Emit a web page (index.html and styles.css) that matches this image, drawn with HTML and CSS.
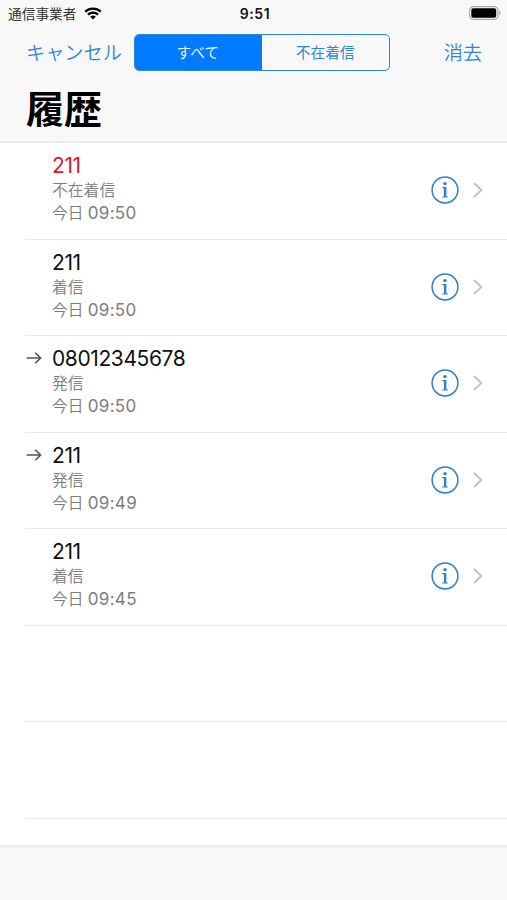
FILE: index.html
```html
<!DOCTYPE html>
<html lang="ja">
<head>
<meta charset="utf-8">
<title>履歴</title>
<link rel="stylesheet" href="styles.css">
</head>
<body>
<svg class="defs" aria-hidden="true">
  <symbol id="info" viewBox="0 0 28 28">
    <circle cx="14" cy="14" r="12.9" fill="none" stroke="currentColor" stroke-width="1.5"/>
    <circle cx="14" cy="7.6" r="1.7" fill="currentColor"/>
    <path d="M11.3 11h4.1v9.4h1.5v1.2h-5.6v-1.2h1.6v-8.2h-1.6z" fill="currentColor"/>
  </symbol>
  <symbol id="chevron" viewBox="0 0 10 16">
    <path d="M1 1l7.4 7L1 15" fill="none" stroke="currentColor" stroke-width="1.9"/>
  </symbol>
  <symbol id="arrow" viewBox="0 0 16 12">
    <path d="M.6 6h14M9.2 .7l5.4 5.3-5.4 5.3" fill="none" stroke="currentColor" stroke-width="1.6"/>
  </symbol>
</svg>
<div class="screen">
  <header class="header">
    <div class="status">
      <div class="carrier">
        <span>通信事業者</span>
        <svg class="wifi" viewBox="0 0 18 13">
          <path d="M1.2 4.7a11.2 11.2 0 0 1 15.6 0M4 7.7a7.2 7.2 0 0 1 10 0" fill="none" stroke="currentColor" stroke-width="2.3"/>
          <path d="M9 12.6L6.2 9.8a4 4 0 0 1 5.6 0z" fill="currentColor"/>
        </svg>
      </div>
      <div class="clock">9:51</div>
      <svg class="battery" viewBox="0 0 32 14">
        <rect x=".6" y=".6" width="28.3" height="12.8" rx="3.6" fill="none" stroke="#aaa" stroke-width="1.2"/>
        <rect x="2.3" y="2.3" width="24.9" height="9.4" rx="1.8" fill="#000"/>
        <path d="M30.2 4.8c1.8.6 1.8 3.8 0 4.4z" fill="#999"/>
      </svg>
    </div>
    <nav class="nav">
      <span class="action">キャンセル</span>
      <div class="segments">
        <span class="segment selected">すべて</span>
        <span class="segment">不在着信</span>
      </div>
      <span class="action clear">消去</span>
    </nav>
    <h1>履歴</h1>
  </header>
  <main class="list">
    <div class="row missed">
      <div class="direction"></div>
      <div class="call"><div class="number">211</div><div class="kind">不在着信</div><div class="time">今日 <span>09:50</span></div></div>
      <svg class="info"><use href="#info"/></svg><svg class="chevron"><use href="#chevron"/></svg>
    </div>
    <div class="row">
      <div class="direction"></div>
      <div class="call"><div class="number">211</div><div class="kind">着信</div><div class="time">今日 <span>09:50</span></div></div>
      <svg class="info"><use href="#info"/></svg><svg class="chevron"><use href="#chevron"/></svg>
    </div>
    <div class="row">
      <div class="direction"><svg class="arrow"><use href="#arrow"/></svg></div>
      <div class="call"><div class="number">08012345678</div><div class="kind">発信</div><div class="time">今日 <span>09:50</span></div></div>
      <svg class="info"><use href="#info"/></svg><svg class="chevron"><use href="#chevron"/></svg>
    </div>
    <div class="row">
      <div class="direction"><svg class="arrow"><use href="#arrow"/></svg></div>
      <div class="call"><div class="number">211</div><div class="kind">発信</div><div class="time">今日 <span>09:49</span></div></div>
      <svg class="info"><use href="#info"/></svg><svg class="chevron"><use href="#chevron"/></svg>
    </div>
    <div class="row">
      <div class="direction"></div>
      <div class="call"><div class="number">211</div><div class="kind">着信</div><div class="time">今日 <span>09:45</span></div></div>
      <svg class="info"><use href="#info"/></svg><svg class="chevron"><use href="#chevron"/></svg>
    </div>
    <div class="row"></div>
    <div class="row"></div>
  </main>
  <footer class="toolbar"></footer>
</div>
</body>
</html>
```
FILE: styles.css
```css
* { box-sizing: border-box; }
body {
  margin: 0;
  background: #fff;
  color: #111;
  font-family: Inter, "Noto Sans CJK JP", sans-serif;
}
svg { display: block; flex: none; }
.defs { display: none; }
.screen {
  display: flex;
  flex-direction: column;
  width: 507px;
  height: 900px;
  overflow: hidden;
}
.header {
  flex: none;
  height: 143px;
  background: #f8f8f8;
  border-bottom: 2px solid #ebebeb;
}
.status {
  display: grid;
  grid-template-columns: 1fr auto 1fr;
  align-items: center;
  height: 27px;
  padding: 0 6px 0 8px;
}
.carrier {
  display: flex;
  align-items: center;
  gap: 8px;
  font-size: 13.7px;
  line-height: 20px;
  color: #333;
}
.wifi { width: 18px; height: 13px; color: #000; margin-top: -1px; }
.clock {
  padding-left: 1px;
  font-size: 14px;
  font-weight: 600;
  letter-spacing: 0.6px;
}
.battery { width: 32px; height: 14px; justify-self: end; margin-top: -1px; }
.nav {
  display: flex;
  align-items: center;
  height: 50px;
  padding: 0 25px 0 26px;
  color: #2f86d9;
}
.action {
  width: 108px;
  padding-top: 1px;
  font-size: 19.2px;
  line-height: 28px;
  white-space: nowrap;
  font-weight: 350;
}
.clear { width: auto; margin-left: auto; }
.segments {
  display: flex;
  width: 256px;
  height: 37px;
  border: 1.5px solid #2f86d9;
  border-radius: 5px;
  overflow: hidden;
}
.segment {
  flex: 1;
  font-size: 14.7px;
  line-height: 36px;
  text-align: center;
}
.selected {
  margin: -1px 0 -1px -1px;
  line-height: 38px;
  background: #007aff;
  color: #e4f2ff;
}
h1 {
  margin: 4px 0 0 26px;
  font-size: 38px;
  line-height: 56px;
  font-weight: 700;
  color: #000;
}
.list { flex: none; }
.row {
  display: flex;
  height: 96.5px;
  margin-left: 25px;
  padding-right: 24px;
  border-bottom: 1px solid #e8e8e8;
}
.direction { width: 27px; padding: 16px 0 0 1px; }
.arrow { width: 16px; height: 12px; color: #555; }
.call { flex: 1; color: #7c7c7c; }
.number {
  margin-top: 10px;
  font-size: 21px;
  line-height: 26px;
  letter-spacing: -0.4px;
  color: #111;
}
.missed .number { color: #d3202a; }
.kind { font-size: 15.8px; line-height: 23px; font-weight: 350; }
.time { font-size: 15.7px; line-height: 23px; font-weight: 350; }
.time span { font-size: 17px; font-weight: 400; letter-spacing: 0.3px; }
.info { width: 28px; height: 28px; margin-top: 33px; margin-right: 0.5px; color: #2f7fcf; }
.chevron { width: 10px; height: 16px; margin: 39px 0 0 13.5px; color: #c2c2c2; }
.toolbar {
  height: 55px;
  margin-top: auto;
  background: #f8f8f8;
  border-top: 3px solid #efefef;
}
```
